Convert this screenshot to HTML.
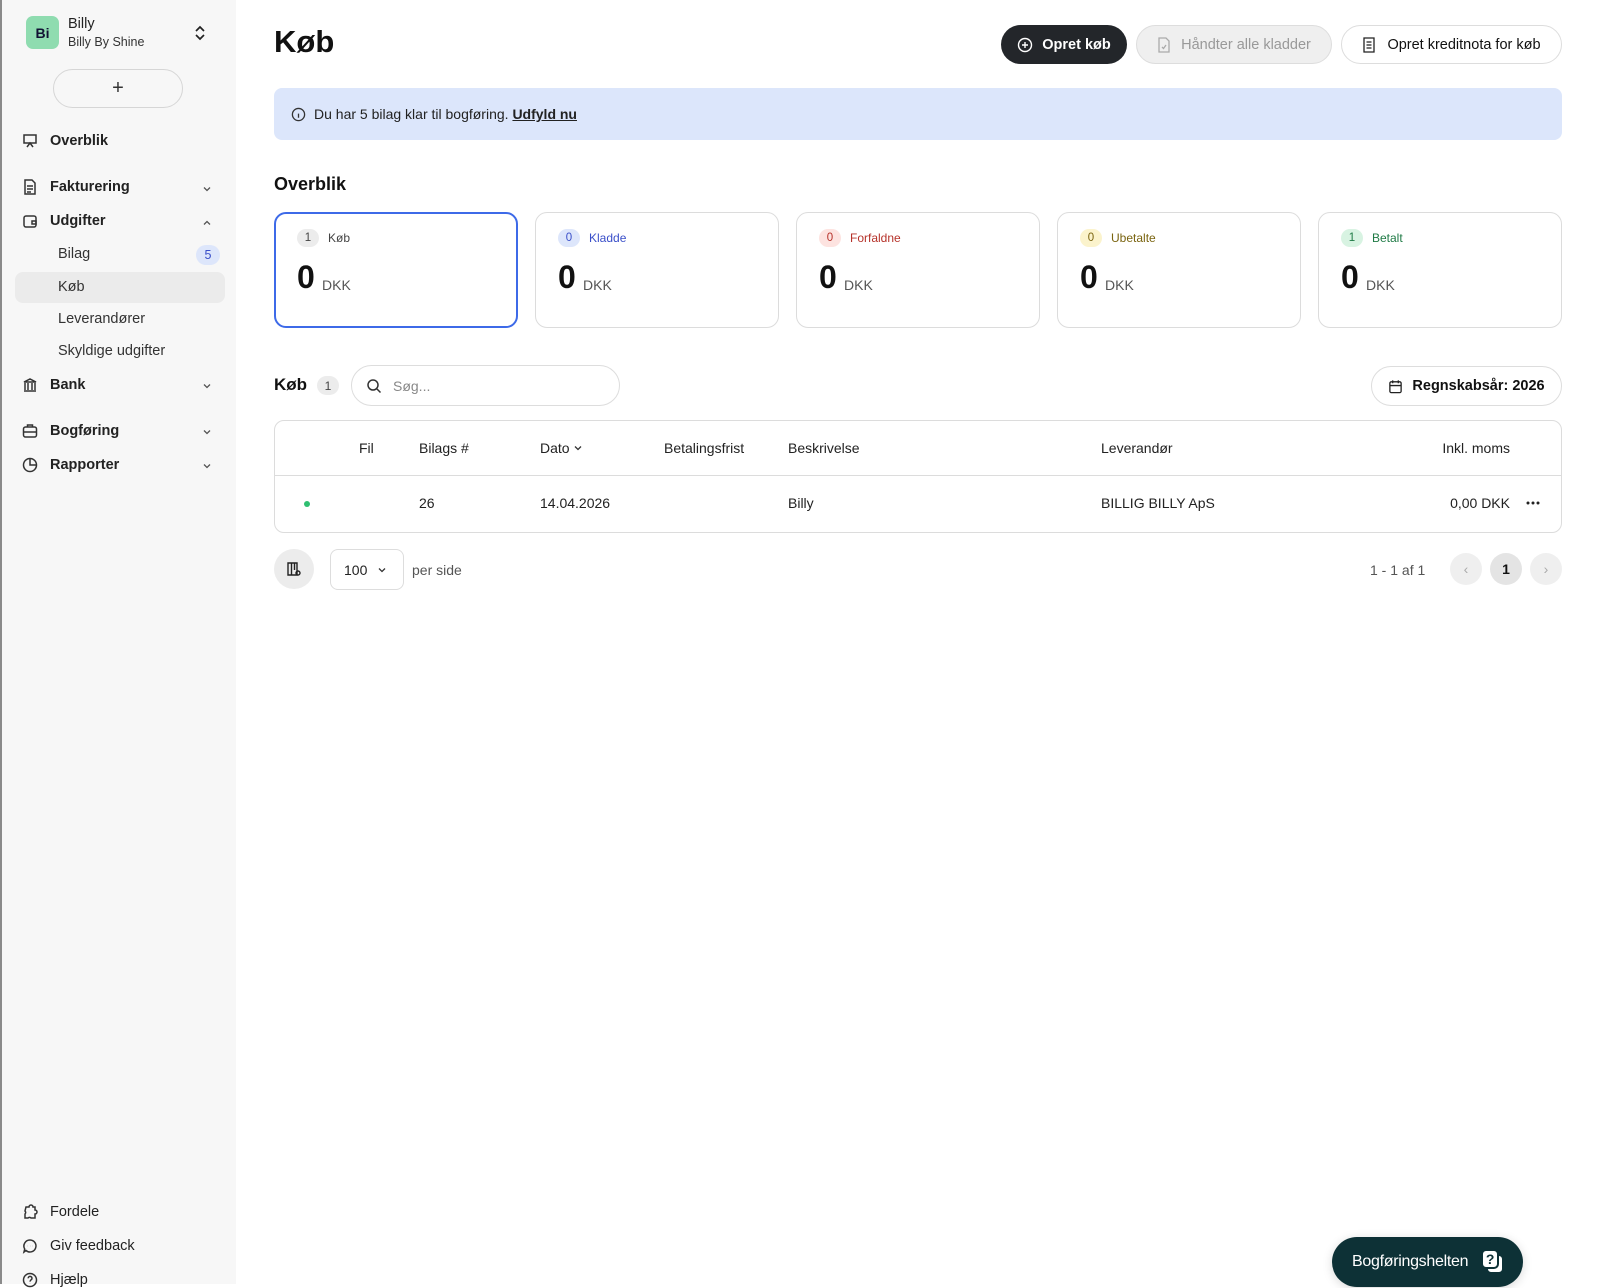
<!DOCTYPE html>
<html><head><meta charset="utf-8">
<style>
*{box-sizing:border-box;margin:0;padding:0}
body{width:1601px;height:1284px;overflow:hidden;font-family:"Liberation Sans",sans-serif;color:#1f2328;background:#fff;position:relative;font-size:14px}
.a{position:absolute}
.side{left:0;top:0;width:236px;height:1284px;background:#f7f7f7;border-left:2px solid #8a8a8a}
.nav{position:absolute;left:20px;display:flex;align-items:center;font-size:14.5px;color:#222}
.nav svg{width:16px;height:16px;margin-right:12px;fill:none;stroke:#333;stroke-width:1.5}
.nav b{font-weight:700}
.chev{position:absolute;left:200px;width:10px;height:10px}
.sub{position:absolute;left:56px;font-size:14.5px;color:#333}
.btn{position:absolute;top:25px;height:39px;border-radius:20px;display:flex;align-items:center;justify-content:center;font-size:14.5px;font-weight:700}
.card{position:absolute;top:212px;width:244px;height:116px;border:1px solid #dcdcdc;border-radius:12px}
.card .pill{position:absolute;left:22px;top:16px;width:22px;height:18px;border-radius:9px;font-size:11.5px;display:flex;align-items:center;justify-content:center}
.card .lbl{position:absolute;left:53px;top:18px;font-size:12px}
.card .big{position:absolute;left:22px;top:46px;font-size:32px;color:#111;font-weight:700}
.card .dkk{position:absolute;left:47px;top:64px;font-size:14px;color:#555}
.th{position:absolute;top:440px;font-size:14px;color:#222}
.td{position:absolute;top:495px;font-size:14px;color:#222}
</style></head><body>
<div class="a side">
  <div class="a" style="left:24px;top:16px;width:33px;height:33px;border-radius:7px;background:#8fdcb0;display:flex;align-items:center;justify-content:center;font-weight:700;font-size:14px;color:#113">Bi</div>
  <div class="a" style="left:66px;top:16px;font-size:14.5px;color:#222">Billy</div>
  <div class="a" style="left:66px;top:35px;font-size:12.5px;color:#333">Billy By Shine</div>
  <svg class="a" style="left:191px;top:24px" width="14" height="18" viewBox="0 0 14 18" fill="none" stroke="#222" stroke-width="1.7"><path d="M3 7l4-4 4 4M3 11l4 4 4-4"/></svg>
  <div class="a" style="left:51px;top:69px;width:130px;height:39px;border:1px solid #d6d6d6;border-radius:20px;display:flex;align-items:center;justify-content:center;font-size:20px;color:#333">+</div>
  <div class="nav" style="top:133px"><svg viewBox="0 0 16 16"><rect x="2" y="2" width="12" height="8"/><path d="M5 14l3-4 3 4"/></svg><b>Overblik</b></div>
  <div class="nav" style="top:179px"><svg viewBox="0 0 16 16"><path d="M3 1h7l3 3v11H3z M5 7h6M5 10h6M5 13h4"/></svg><b>Fakturering</b></div>
  <svg class="chev" style="top:184px" viewBox="0 0 10 10" fill="none" stroke="#555" stroke-width="1.3"><path d="M2 3.5l3 3 3-3"/></svg>
  <div class="nav" style="top:213px"><svg viewBox="0 0 16 16"><rect x="2" y="3" width="12" height="11" rx="2"/><path d="M10 8h4v3h-4z"/></svg><b>Udgifter</b></div>
  <svg class="chev" style="top:218px" viewBox="0 0 10 10" fill="none" stroke="#555" stroke-width="1.3"><path d="M2 6.5l3-3 3 3"/></svg>
  <div class="sub" style="top:246px">Bilag</div>
  <div class="a" style="left:194px;top:245px;width:24px;height:20px;border-radius:10px;background:#dde6fb;color:#3a4fc9;font-size:12.5px;display:flex;align-items:center;justify-content:center">5</div>
  <div class="a" style="left:13px;top:272px;width:210px;height:31px;border-radius:8px;background:#ebebeb"></div>
  <div class="sub" style="top:279px">Køb</div>
  <div class="sub" style="top:311px">Leverandører</div>
  <div class="sub" style="top:343px">Skyldige udgifter</div>
  <div class="nav" style="top:377px"><svg viewBox="0 0 16 16"><path d="M2 5l6-3 6 3zM3 6v7M6 6v7M10 6v7M13 6v7M2 14h12"/></svg><b>Bank</b></div>
  <svg class="chev" style="top:381px" viewBox="0 0 10 10" fill="none" stroke="#555" stroke-width="1.3"><path d="M2 3.5l3 3 3-3"/></svg>
  <div class="nav" style="top:423px"><svg viewBox="0 0 16 16"><rect x="1.5" y="4" width="13" height="10" rx="2"/><path d="M5.5 4V2h5v2M1.5 9h13"/></svg><b>Bogføring</b></div>
  <svg class="chev" style="top:427px" viewBox="0 0 10 10" fill="none" stroke="#555" stroke-width="1.3"><path d="M2 3.5l3 3 3-3"/></svg>
  <div class="nav" style="top:457px"><svg viewBox="0 0 16 16"><circle cx="8" cy="8" r="6.5"/><path d="M8 1.5V8h6.5"/></svg><b>Rapporter</b></div>
  <svg class="chev" style="top:461px" viewBox="0 0 10 10" fill="none" stroke="#555" stroke-width="1.3"><path d="M2 3.5l3 3 3-3"/></svg>
  <div class="nav" style="top:1204px"><svg viewBox="0 0 16 16"><path d="M4 3h3a2 2 0 014 0h2v3a2 2 0 010 4v4H9a2 2 0 00-3 0H3v-4a2 2 0 000-3z"/></svg>Fordele</div>
  <div class="nav" style="top:1238px"><svg viewBox="0 0 16 16"><path d="M8 2a6 6 0 11-4 10.5L2 14l.7-3A6 6 0 018 2z"/><path d="M5.5 8h.1M8 8h.1M10.5 8h.1"/></svg>Giv feedback</div>
  <div class="nav" style="top:1272px"><svg viewBox="0 0 16 16"><circle cx="8" cy="8" r="6.5"/><path d="M6.2 6.3a1.9 1.9 0 113 1.5c-.8.5-1.2.9-1.2 1.8M8 11.5v.1"/></svg>Hjælp</div>
</div>

<div class="a" style="left:274px;top:24px;font-size:31px;font-weight:700;color:#111">Køb</div>
<div class="btn" style="left:1001px;width:126px;background:#23262a;color:#fff"><svg width="16" height="16" viewBox="0 0 16 16" fill="none" stroke="#fff" stroke-width="1.4" style="margin-right:9px"><circle cx="8" cy="8" r="6.5"/><path d="M8 5v6M5 8h6"/></svg>Opret køb</div>
<div class="btn" style="left:1136px;width:196px;background:#efefef;border:1px solid #ddd;color:#999;font-weight:400"><svg width="14" height="16" viewBox="0 0 14 16" fill="none" stroke="#aaa" stroke-width="1.3" style="margin-right:10px"><path d="M2 1h7l3 3v11H2z"/><path d="M5 10l1.5 1.5L9 8"/></svg>Håndter alle kladder</div>
<div class="btn" style="left:1341px;width:221px;background:#fff;border:1px solid #ddd;color:#111;font-weight:400"><svg width="14" height="16" viewBox="0 0 14 16" fill="none" stroke="#222" stroke-width="1.3" style="margin-right:11px"><path d="M2 1h10v14H2z M4.5 5h5M4.5 8h5M4.5 11h5"/></svg>Opret kreditnota for køb</div>

<div class="a" style="left:274px;top:88px;width:1288px;height:52px;background:#dce6fb;border-radius:8px;display:flex;align-items:center;padding-left:17px;font-size:14px;color:#222">
<svg width="15" height="15" viewBox="0 0 16 16" fill="none" stroke="#333" stroke-width="1.4" style="margin-right:8px"><circle cx="8" cy="8" r="6.5"/><path d="M8 7v4.5M8 4.6v.1"/></svg>Du har 5 bilag klar til bogføring.&nbsp;<b style="text-decoration:underline">Udfyld nu</b></div>

<div class="a" style="left:274px;top:174px;font-size:18px;font-weight:700;color:#111">Overblik</div>

<div class="card" style="left:274px;border:2px solid #3d6ae8"><div class="pill" style="background:#ececec;color:#444;left:21px;top:15px">1</div><div class="lbl" style="color:#444;left:52px;top:17px">Køb</div><div class="big" style="left:21px;top:45px">0</div><div class="dkk" style="left:46px;top:63px">DKK</div></div>
<div class="card" style="left:535px"><div class="pill" style="background:#dde6fb;color:#3a4fc9">0</div><div class="lbl" style="color:#3a4fc9">Kladde</div><div class="big">0</div><div class="dkk">DKK</div></div>
<div class="card" style="left:796px"><div class="pill" style="background:#fde3e0;color:#b6322a">0</div><div class="lbl" style="color:#b6322a">Forfaldne</div><div class="big">0</div><div class="dkk">DKK</div></div>
<div class="card" style="left:1057px"><div class="pill" style="background:#fbf3cc;color:#7a6410">0</div><div class="lbl" style="color:#7a6410">Ubetalte</div><div class="big">0</div><div class="dkk">DKK</div></div>
<div class="card" style="left:1318px"><div class="pill" style="background:#d8f3e2;color:#1f7a45">1</div><div class="lbl" style="color:#1f7a45">Betalt</div><div class="big">0</div><div class="dkk">DKK</div></div>

<div class="a" style="left:274px;top:375px;font-size:17px;font-weight:700;color:#111">Køb</div>
<div class="a" style="left:317px;top:376px;width:22px;height:19px;border-radius:10px;background:#ececec;font-size:12px;color:#444;display:flex;align-items:center;justify-content:center">1</div>
<div class="a" style="left:351px;top:365px;width:269px;height:41px;border:1px solid #ddd;border-radius:21px;display:flex;align-items:center;padding-left:14px;color:#888;font-size:14px"><svg width="16" height="16" viewBox="0 0 16 16" fill="none" stroke="#333" stroke-width="1.5" style="margin-right:11px"><circle cx="7" cy="7" r="5"/><path d="M11 11l3.5 3.5"/></svg>Søg...</div>
<div class="a" style="left:1371px;top:366px;width:191px;height:40px;border:1px solid #ddd;border-radius:20px;display:flex;align-items:center;justify-content:center;font-size:14.5px;font-weight:700;color:#111"><svg width="15" height="15" viewBox="0 0 16 16" fill="none" stroke="#222" stroke-width="1.4" style="margin-right:9px"><rect x="2" y="3" width="12" height="11.5" rx="1.5"/><path d="M2 7h12M5 1.5v3M11 1.5v3"/></svg>Regnskabsår: 2026</div>

<div class="a" style="left:274px;top:420px;width:1288px;height:113px;border:1px solid #dcdcdc;border-radius:10px"></div>
<div class="a" style="left:275px;top:475px;width:1286px;height:1px;background:#dcdcdc"></div>
<div class="th" style="left:359px">Fil</div>
<div class="th" style="left:419px">Bilags #</div>
<div class="th" style="left:540px">Dato <svg width="10" height="10" viewBox="0 0 10 10" fill="none" stroke="#333" stroke-width="1.3"><path d="M2 3.5l3 3 3-3"/></svg></div>
<div class="th" style="left:664px">Betalingsfrist</div>
<div class="th" style="left:788px">Beskrivelse</div>
<div class="th" style="left:1101px">Leverandør</div>
<div class="th" style="right:91px">Inkl. moms</div>
<div class="a" style="left:304px;top:501px;width:6px;height:6px;border-radius:3px;background:#2fbf71"></div>
<div class="td" style="left:419px">26</div>
<div class="td" style="left:540px">14.04.2026</div>
<div class="td" style="left:788px">Billy</div>
<div class="td" style="left:1101px">BILLIG BILLY ApS</div>
<div class="td" style="right:91px">0,00 DKK</div>
<svg class="a" style="left:1526px;top:501px" width="14" height="4" viewBox="0 0 14 4" fill="#222"><circle cx="2" cy="2" r="1.5"/><circle cx="7" cy="2" r="1.5"/><circle cx="12" cy="2" r="1.5"/></svg>

<div class="a" style="left:274px;top:549px;width:40px;height:40px;border-radius:20px;background:#ececec;display:flex;align-items:center;justify-content:center"><svg width="16" height="16" viewBox="0 0 16 16" fill="none" stroke="#222" stroke-width="1.4"><path d="M2 2h9v12H2zM5.5 2v12M8.5 2v7"/><circle cx="12" cy="12" r="2"/></svg></div>
<div class="a" style="left:330px;top:549px;width:74px;height:41px;border:1px solid #ddd;border-radius:8px;display:flex;align-items:center;padding-left:13px;font-size:14px;color:#222">100 <svg width="10" height="10" viewBox="0 0 10 10" fill="none" stroke="#333" stroke-width="1.3" style="margin-left:10px"><path d="M2 3.5l3 3 3-3"/></svg></div>
<div class="a" style="left:412px;top:562px;font-size:14px;color:#555">per side</div>
<div class="a" style="left:1370px;top:562px;font-size:14px;color:#555">1 - 1 af 1</div>
<div class="a" style="left:1450px;top:553px;width:32px;height:32px;border-radius:16px;background:#efefef;color:#aaa;display:flex;align-items:center;justify-content:center;font-size:14px">‹</div>
<div class="a" style="left:1490px;top:553px;width:32px;height:32px;border-radius:16px;background:#e4e4e4;color:#111;display:flex;align-items:center;justify-content:center;font-size:14px;font-weight:700">1</div>
<div class="a" style="left:1530px;top:553px;width:32px;height:32px;border-radius:16px;background:#efefef;color:#aaa;display:flex;align-items:center;justify-content:center;font-size:14px">›</div>

<div class="a" style="left:1332px;top:1237px;width:191px;height:50px;border-radius:25px;background:#0d3136;color:#fff;display:flex;align-items:center;padding-left:20px;font-size:16px;letter-spacing:-0.3px;box-shadow:0 2px 10px rgba(0,0,0,.15)">Bogføringshelten
<svg width="26" height="28" viewBox="0 0 26 28" style="margin-left:12px"><rect x="7" y="7" width="16" height="18" rx="4" fill="#fff" stroke="#0d3136" stroke-width="2"/><rect x="2" y="2" width="16" height="18" rx="4" fill="#fff" stroke="#0d3136" stroke-width="2"/><text x="10" y="16" text-anchor="middle" font-family="Liberation Sans" font-weight="700" font-size="14" fill="#0d3136">?</text></svg></div>
</body></html>
